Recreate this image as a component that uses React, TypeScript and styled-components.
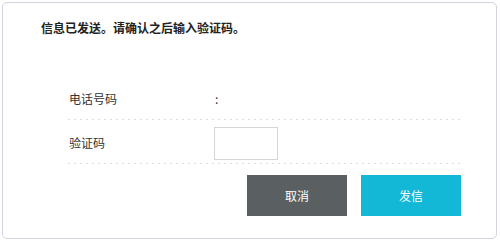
import React from "react";
import styled, { createGlobalStyle } from "styled-components";

const GlobalStyle = createGlobalStyle`
  html, body {
    margin: 0;
    padding: 0;
    background: #ffffff;
  }
  body {
    font-family: "Noto Sans CJK SC", "Noto Sans", sans-serif;
  }
`;

const Card = styled.div`
  box-sizing: border-box;
  margin: 2px;
  width: 495px;
  height: 237px;
  border: 1px solid #d3d2e2;
  border-radius: 5px;
  background: #ffffff;
  padding: 17px 35px 0 38px;
  display: flex;
  flex-direction: column;
`;

const Title = styled.div`
  font-size: 12px;
  line-height: 16px;
  font-weight: 700;
  color: #222222;
`;

const Form = styled.div`
  margin-top: 40px;
  margin-left: 27px;
  display: flex;
  flex-direction: column;
`;

const Row = styled.div`
  height: 44px;
  display: flex;
  flex-direction: row;
  align-items: center;
  background-image: repeating-linear-gradient(
    to right,
    #dcdcdc 0 2px,
    transparent 2px 6px
  );
  background-size: 100% 1px;
  background-repeat: no-repeat;
  background-position: left bottom;
`;

const Label = styled.div`
  width: 146px;
  padding-left: 1px;
  box-sizing: border-box;
  font-size: 12px;
  color: #333333;
`;

const Value = styled.div`
  font-size: 12px;
  color: #333333;
  padding-left: 1px;
`;

const CodeInput = styled.input`
  box-sizing: border-box;
  width: 64px;
  height: 33px;
  margin-top: 2px;
  border: 1px solid #d6d6d6;
  border-radius: 0;
  padding: 0 4px;
  outline: none;
  font-size: 12px;
`;

const Actions = styled.div`
  margin-top: 11px;
  display: flex;
  flex-direction: row;
  justify-content: flex-end;
  gap: 14px;
`;

const Button = styled.button<{ $primary?: boolean }>`
  width: 100px;
  height: 41px;
  border: none;
  border-radius: 0;
  background: ${(p) => (p.$primary ? "#13b8d7" : "#5a6061")};
  color: #ffffff;
  font-family: "Noto Sans CJK SC", "Noto Sans", sans-serif;
  font-size: 12px;
  cursor: pointer;
`;

const App = () => {
  return (
    <>
      <GlobalStyle />
      <Card>
        <Title>信息已发送。请确认之后输入验证码。</Title>
        <Form>
          <Row>
            <Label>电话号码</Label>
            <Value>:</Value>
          </Row>
          <Row>
            <Label>验证码</Label>
            <CodeInput type="text" />
          </Row>
          <Actions>
            <Button>取消</Button>
            <Button $primary>发信</Button>
          </Actions>
        </Form>
      </Card>
    </>
  );
};

export default App;
